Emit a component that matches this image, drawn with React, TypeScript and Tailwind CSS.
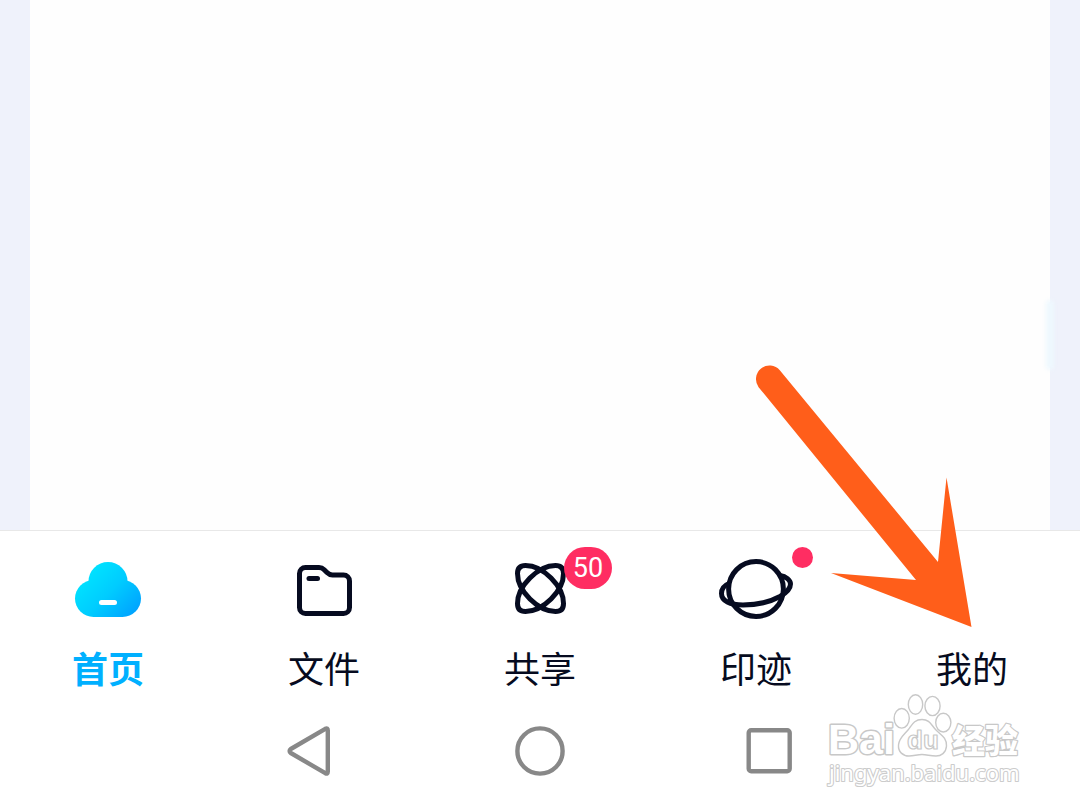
import type { ReactNode } from "react";
import clsx from "clsx";

interface Tab {
  id: string;
  label: string;
  icon?: ReactNode;
  active?: boolean;
  badge?: number;
  dot?: boolean;
  pointer?: boolean;
}

const iconClass = "w-20 h-[72px]";

const CloudIcon = () => (
  <svg viewBox="0 0 80 72" className={iconClass} aria-hidden="true">
    <defs>
      <linearGradient id="cloud" gradientUnits="userSpaceOnUse" x1="18" y1="20" x2="64" y2="64">
        <stop offset="0" stopColor="#00e4ff" />
        <stop offset="0.5" stopColor="#00ccff" />
        <stop offset="1" stopColor="#00a4ff" />
      </linearGradient>
    </defs>
    <g fill="url(#cloud)">
      <circle cx="40" cy="30.5" r="19.5" />
      <circle cx="25.5" cy="47.5" r="18.5" />
      <circle cx="54.5" cy="47.5" r="18.5" />
      <path d="M25.5 36H54.5V66H25.5Z" />
    </g>
    <rect x="31" y="49" width="18" height="5" rx="2.5" fill="#fff" />
  </svg>
);

const FolderIcon = () => (
  <svg viewBox="0 0 80 72" className={iconClass} fill="none" stroke="currentColor" strokeWidth="5" aria-hidden="true">
    <path d="M21.5 16.5H35Q38 16.5 40.2 18.7L43 21.5Q45.5 24 48.5 24H59.5A6 6 0 0 1 65.5 30V56.5A6 6 0 0 1 59.5 62.5H21.5A6 6 0 0 1 15.5 56.5V22.5A6 6 0 0 1 21.5 16.5Z" />
    <path d="M25 27.5H33.5" strokeLinecap="round" />
  </svg>
);

const orbit =
  "M17.5 22.5C17.5 17 20 14.5 25.5 14.5C43 14.5 63.5 35 63.5 52.5C63.5 58 61 60.5 55.5 60.5C38 60.5 17.5 40 17.5 22.5Z";

const ShareIcon = () => (
  <svg viewBox="0 0 80 72" className={iconClass} fill="none" stroke="currentColor" strokeWidth="5" aria-hidden="true">
    <path d={orbit} />
    <path d={orbit} transform="rotate(90 40.5 37.5)" />
  </svg>
);

const PlanetIcon = () => (
  <svg viewBox="0 0 80 72" className={iconClass} fill="none" stroke="currentColor" strokeWidth="5" aria-hidden="true">
    <circle cx="40" cy="38" r="27.4" />
    <path d="M13 32.5C8 34.5 5.5 38.5 5.5 42.5C5.5 50 14 54 27 54C40 54 54 51 64 45.5C70 42 74.5 38.5 74.5 33C74.5 29 70 25.5 64 24.5" />
  </svg>
);

const tabs: Tab[] = [
  { id: "home", label: "首页", icon: <CloudIcon />, active: true },
  { id: "files", label: "文件", icon: <FolderIcon /> },
  { id: "share", label: "共享", icon: <ShareIcon />, badge: 50 },
  { id: "moments", label: "印迹", icon: <PlanetIcon />, dot: true },
  { id: "mine", label: "我的", pointer: true },
];

const PointerArrow = () => (
  <svg
    viewBox="0 0 218 264"
    className="absolute right-1/2 -top-[166px] w-[218px] h-[264px] pointer-events-none"
    fill="#ff5e1a"
    aria-hidden="true"
  >
    <path d="M4.6 22.2A13.6 13.6 0 0 1 25.8 5.2L184 197L192.5 112.5L217.5 262L77 208L162 215Z" />
  </svg>
);

const TabItem = ({ tab }: { tab: Tab }) => (
  <li className="relative flex-1">
    <a
      href={`#${tab.id}`}
      aria-current={tab.active ? "page" : undefined}
      className={clsx(
        "flex flex-col items-center gap-5 pt-5",
        tab.active ? "text-[#00b0ff] font-bold" : "text-[#060b20]"
      )}
    >
      <span className="relative block w-20 h-[72px]">
        {tab.icon}
        {tab.badge && (
          <span className="absolute left-16 -top-1 flex h-[42px] w-12 items-center justify-center rounded-full bg-[#ff2d62] text-[27px] font-normal text-white font-['Roboto','Noto_Sans_CJK_SC',sans-serif]">
            {tab.badge}
          </span>
        )}
        {tab.dot && <span className="absolute left-19 -top-1 size-[21px] rounded-full bg-[#ff2d62]" />}
      </span>
      <span className="text-4xl leading-[48px]">{tab.label}</span>
    </a>
    {tab.pointer && <PointerArrow />}
  </li>
);

const SystemBar = () => (
  <div className="flex h-[119px] items-center justify-center gap-[180px] text-[#888]">
    <button type="button" aria-label="返回">
      <svg viewBox="0 0 50 50" className="size-[50px]" fill="none" stroke="currentColor" strokeWidth="4.4" strokeLinejoin="round">
        <path d="M40.3 2.8Q42.8 1.6 42.8 4.5V45.5Q42.8 48.4 40.3 47.2L5.8 27Q3.4 25 5.8 23Z" />
      </svg>
    </button>
    <button type="button" aria-label="主屏幕">
      <svg viewBox="0 0 50 50" className="size-[50px]" fill="none" stroke="currentColor" strokeWidth="4.4">
        <circle cx="25" cy="25" r="22.6" />
      </svg>
    </button>
    <button type="button" aria-label="最近任务">
      <svg viewBox="0 0 50 50" className="size-[50px]" fill="none" stroke="currentColor" strokeWidth="4.4">
        <rect x="3.7" y="4.2" width="41" height="41" rx="2.5" />
      </svg>
    </button>
  </div>
);

const Watermark = () => (
  <svg
    viewBox="26 12 200 98"
    className="absolute bottom-5 right-[54px] w-[200px] h-[98px] pointer-events-none"
    fill="#fff"
    stroke="#c8c8c8"
    strokeWidth="1.4"
    strokeLinejoin="round"
  >
    <text x="28" y="74" fontSize="43" fontWeight="700" fontFamily="Liberation Sans, sans-serif" paintOrder="stroke" strokeWidth="3">
      Bai
    </text>
    <ellipse cx="101.7" cy="38.3" rx="7.6" ry="9.8" />
    <ellipse cx="115.5" cy="24.5" rx="7.2" ry="9.8" />
    <ellipse cx="132.5" cy="26" rx="7.6" ry="9.6" />
    <ellipse cx="143.3" cy="42.6" rx="7.6" ry="9.4" />
    <path d="M122 39.5C130 39.5 131 45 136 50C141 55 147 58 146.5 66C146 73 141 76 136 76C130 76 127 74.5 122 74.5C117 74.5 114 76 109 76C103 76 98 72 98.5 65C99 58 104 55 108 50C112 45 114 39.5 122 39.5Z" />
    <text x="107" y="69" fontSize="26" fontWeight="700" fontFamily="Liberation Sans, sans-serif" strokeWidth="1.2">
      du
    </text>
    <text x="152" y="73" fontSize="33" fontWeight="900" fontFamily="Noto Sans CJK SC, sans-serif" paintOrder="stroke" strokeWidth="2.4">
      经验
    </text>
    <text x="29" y="101" fontSize="22" fontFamily="Noto Sans, sans-serif" paintOrder="stroke" strokeWidth="2.2" stroke="#ccc">
      jingyan.baidu.com
    </text>
  </svg>
);

export default function App() {
  return (
    <div className="relative flex min-h-screen flex-col overflow-hidden bg-white font-['Noto_Sans_CJK_SC',sans-serif]">
      <main className="flex flex-1 bg-[#eff2fb] px-[30px]">
        <section className="relative flex-1 bg-[#fefefe]">
          <div className="absolute -right-1 top-[300px] h-[70px] w-2 rounded-full bg-[#eef8fe] blur-[2px]" />
        </section>
      </main>

      <footer>
        <nav className="border-t border-[#e8e8e8]">
          <ul className="flex">
            {tabs.map((tab) => (
              <TabItem key={tab.id} tab={tab} />
            ))}
          </ul>
        </nav>
        <SystemBar />
      </footer>

      <Watermark />
    </div>
  );
}
